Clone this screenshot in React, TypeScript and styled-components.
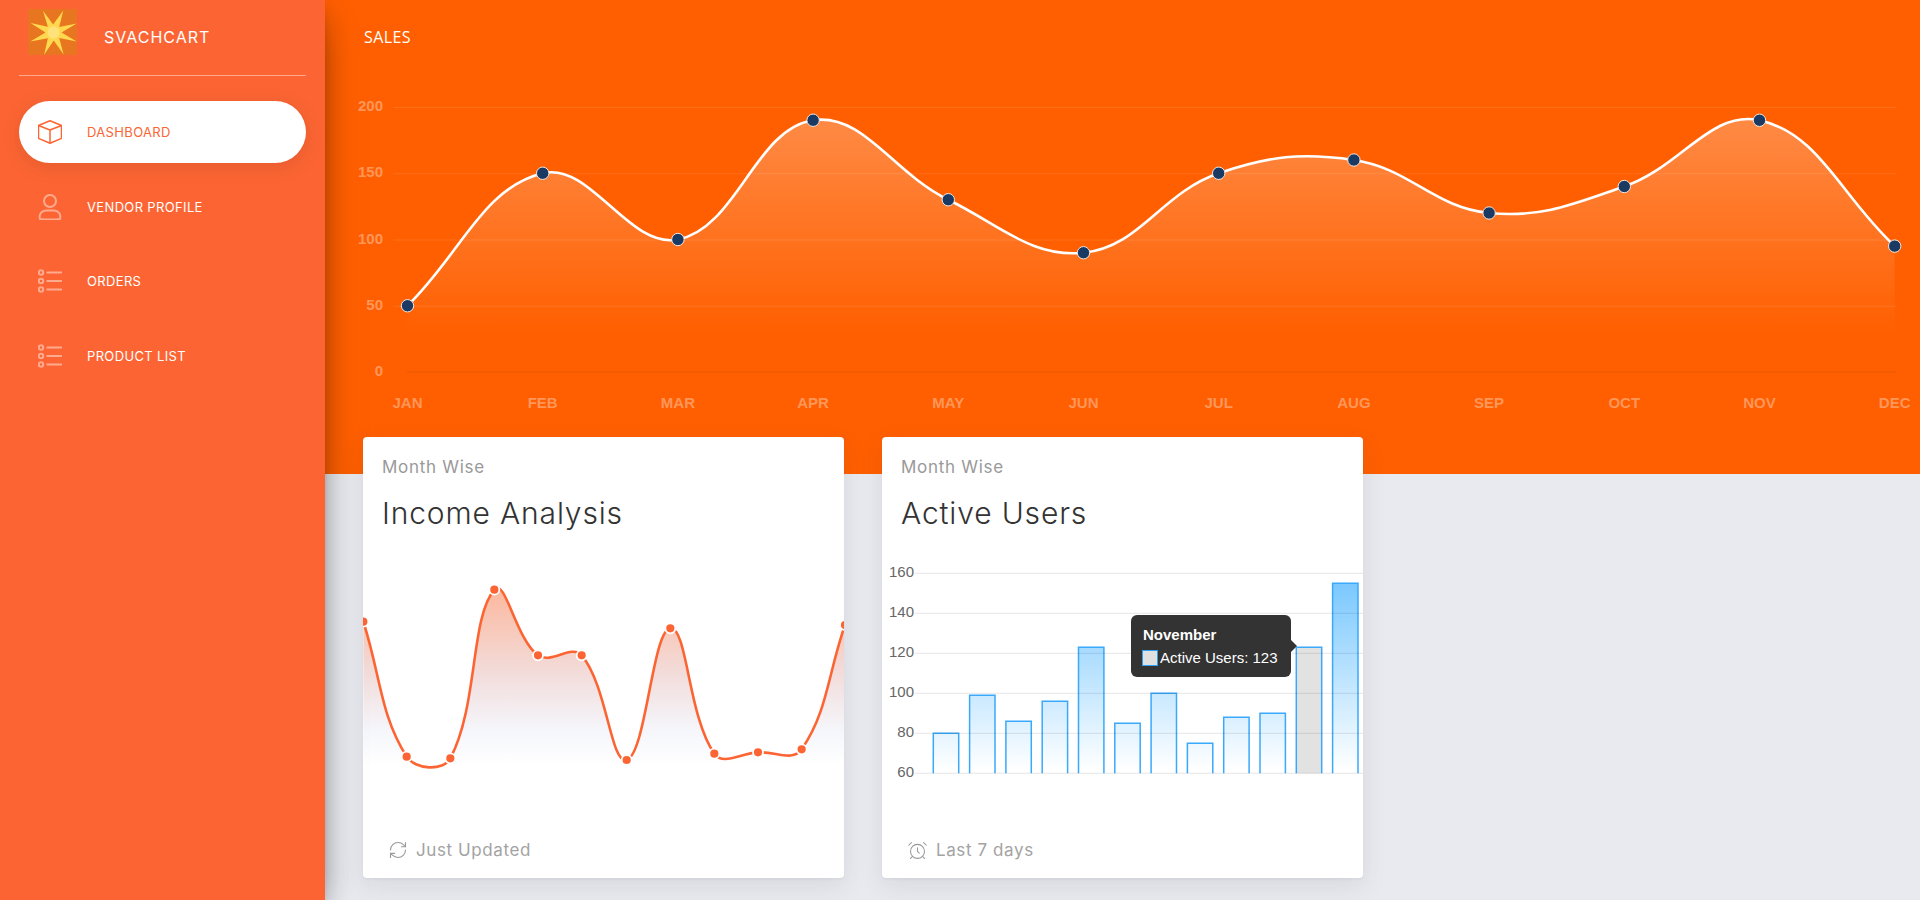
import { ReactNode } from 'react';
import styled, { createGlobalStyle } from 'styled-components';
import { RefreshCw, AlarmClock } from 'lucide-react';

const GlobalStyle = createGlobalStyle`
  html, body {
    margin: 0;
    padding: 0;
    background: #e9eaef;
    font-family: "Inter", "Noto Sans", sans-serif;
  }
  * { box-sizing: border-box; }
`;

const Page = styled.div`
  display: flex;
  width: 100%;
  height: 100vh;
  overflow: hidden;
`;

const Sidebar = styled.aside`
  position: relative;
  z-index: 2;
  flex: 0 0 325px;
  padding: 0 19px;
  background: #fc6533;
  box-shadow: 0 16px 38px -12px rgba(0, 0, 0, 0.56), 0 4px 25px 0 rgba(0, 0, 0, 0.12), 0 8px 10px -5px rgba(0, 0, 0, 0.2);
`;

const Brand = styled.div`
  display: flex;
  align-items: flex-start;
  gap: 27px;
  height: 76px;
  padding: 9px 0 0 9px;
  border-bottom: 1px solid rgba(255, 255, 255, 0.45);
`;

const BrandName = styled.span`
  margin-top: 19px;
  color: #fff;
  font-size: 16px;
  line-height: 18px;
  letter-spacing: 1px;
`;

const Nav = styled.nav`
  display: flex;
  flex-direction: column;
  gap: 12.5px;
  margin-top: 25px;
`;

const NavItem = styled.a<{ $active?: boolean }>`
  display: flex;
  align-items: center;
  gap: 25px;
  height: 62px;
  padding-left: 19px;
  border-radius: 31px;
  background: ${p => (p.$active ? '#fff' : 'transparent')};
  color: ${p => (p.$active ? '#fc6533' : '#fff')};
  font-size: 13px;
  letter-spacing: 0.35px;
  box-shadow: ${p => (p.$active ? '0 4px 20px rgba(0, 0, 0, 0.1)' : 'none')};
  svg {
    flex: 0 0 24px;
    stroke: ${p => (p.$active ? '#fc6533' : 'rgba(255, 255, 255, 0.45)')};
    fill: none;
  }
`;

const Main = styled.main`
  flex: 1;
  min-width: 0;
`;

const SalesPanel = styled.section`
  height: 474px;
  background: #ff5f00;
`;

const SalesTitle = styled.h2`
  margin: 0;
  height: 75px;
  padding: 27px 0 0 39px;
  color: #fff;
  font-family: "Open Sans", sans-serif;
  font-size: 16px;
  font-weight: 400;
  line-height: 20px;
  letter-spacing: 0.4px;
`;

const SalesChart = styled.svg`
  display: block;
  width: 1595px;
  height: 399px;
  overflow: visible;
  text {
    font-family: "Liberation Sans", Arial, sans-serif;
    font-size: 15px;
    font-weight: 700;
    fill: #ff975a;
  }
`;

const CardRow = styled.div`
  display: flex;
  gap: 38px;
  margin-top: -37px;
  padding-left: 38px;
`;

const Card = styled.article`
  display: flex;
  flex-direction: column;
  width: 481px;
  height: 441px;
  padding-top: 20px;
  border-radius: 4px;
  background: #fff;
  box-shadow: 0 2px 2px rgba(0, 0, 0, 0.03), 0 8px 24px rgba(60, 60, 90, 0.1);
`;

const CardKicker = styled.div`
  padding-left: 19px;
  color: #999;
  font-size: 17px;
  line-height: 20px;
  letter-spacing: 0.7px;
`;

const CardTitle = styled.h3`
  margin: 18px 0 0;
  padding-left: 19px;
  color: #333;
  font-size: 30px;
  font-weight: 300;
  line-height: 36px;
  letter-spacing: 0.85px;
`;

const ChartBox = styled.div`
  position: relative;
  height: 280px;
  margin-top: 9px;
  svg { display: block; }
`;

const AxisLabel = styled.text`
  font-family: "Liberation Sans", Arial, sans-serif;
  font-size: 15px;
  fill: #666;
`;

const Tooltip = styled.div`
  position: absolute;
  left: 249px;
  top: 75px;
  width: 160px;
  height: 62px;
  padding: 11px 10px 0 12px;
  border-radius: 6px;
  background: #333;
  color: #fff;
  font-family: "Liberation Sans", Arial, sans-serif;
  font-size: 15px;
  line-height: 17px;
  &::after {
    content: '';
    position: absolute;
    right: -6px;
    top: 25px;
    border-style: solid;
    border-width: 6px 0 6px 6px;
    border-color: transparent transparent transparent #333;
  }
`;

const TooltipTitle = styled.div`
  font-weight: 700;
  margin-bottom: 6px;
`;

const TooltipRow = styled.div`
  display: flex;
  align-items: center;
  gap: 2px;
  margin-left: -1px;
`;

const Swatch = styled.i`
  display: block;
  width: 16px;
  height: 16px;
  border: 1.5px solid #2f9ff0;
  background: #e0e0e0;
`;

const CardFooter = styled.div`
  display: flex;
  align-items: center;
  gap: 8px;
  flex: 1;
  padding: 2px 0 0 25px;
  color: #a3a3a3;
  font-size: 17px;
  letter-spacing: 0.6px;
  svg { color: #999; }
`;

type Pt = { x: number; y: number };

// same curve chart.js draws for tension 0.4
const splinePath = (pts: Pt[], t = 0.4) => {
  const cps = pts.map((cur, i) => {
    const prev = pts[i - 1] || cur;
    const next = pts[i + 1] || cur;
    const d01 = Math.hypot(cur.x - prev.x, cur.y - prev.y);
    const d12 = Math.hypot(next.x - cur.x, next.y - cur.y);
    const fa = (t * d01) / (d01 + d12);
    const fb = (t * d12) / (d01 + d12);
    return {
      inX: cur.x - fa * (next.x - prev.x),
      inY: cur.y - fa * (next.y - prev.y),
      outX: cur.x + fb * (next.x - prev.x),
      outY: cur.y + fb * (next.y - prev.y),
    };
  });
  let d = `M${pts[0].x} ${pts[0].y}`;
  for (let i = 1; i < pts.length; i++) {
    d += ` C${cps[i - 1].outX} ${cps[i - 1].outY} ${cps[i].inX} ${cps[i].inY} ${pts[i].x} ${pts[i].y}`;
  }
  return d;
};

const MONTHS = ['JAN', 'FEB', 'MAR', 'APR', 'MAY', 'JUN', 'JUL', 'AUG', 'SEP', 'OCT', 'NOV', 'DEC'];
const SALES = [50, 150, 100, 190, 130, 90, 150, 160, 120, 140, 190, 95];
const salesY = (v: number) => 372 - v * 1.325;
const salesPts = SALES.map((v, i) => ({ x: 407.5 + i * 135.2, y: salesY(v) }));
const salesLine = splinePath(salesPts);

const SalesGraph = () => (
  <SalesChart viewBox="325 75 1595 399">
    <defs>
      <linearGradient id="salesFill" gradientUnits="userSpaceOnUse" x1="0" y1="118" x2="0" y2="335">
        <stop offset="0" stopColor="#fff" stopOpacity="0.27" />
        <stop offset="1" stopColor="#fff" stopOpacity="0" />
      </linearGradient>
    </defs>
    {[200, 150, 100, 50].map(v => (
      <line key={v} x1="393.5" x2="1896" y1={salesY(v) + 0.5} y2={salesY(v) + 0.5} stroke="rgba(255,255,255,0.1)" />
    ))}
    <line x1="407" x2="1896" y1="372" y2="372" stroke="rgba(0,0,0,0.08)" />
    {[200, 150, 100, 50, 0].map(v => (
      <text key={v} x="383" y={salesY(v) + 4} textAnchor="end">{v}</text>
    ))}
    {MONTHS.map((m, i) => (
      <text key={m} x={salesPts[i].x} y="408" textAnchor="middle">{m}</text>
    ))}
    <path d={`${salesLine} L1894.7 372 L407.5 372 Z`} fill="url(#salesFill)" />
    <path d={salesLine} fill="none" stroke="#fff" strokeWidth="2.6" />
    {salesPts.map(p => (
      <circle key={p.x} cx={p.x} cy={p.y} r="6.2" fill="#1a3a63" stroke="#f3e9e2" strokeWidth="1" />
    ))}
  </SalesChart>
);

// card-local coordinates, the card starts at x 363 and the chart at y 540
const INCOME: Pt[] = [
  [40, 575], [170, 980], [301, 985], [433, 479], [564, 676], [695, 676],
  [830, 990], [961, 595], [1093, 971], [1224, 967], [1355, 958], [1485, 585],
].map(([x, y]) => ({ x: 350 + x / 3 - 363, y: 430 + y / 3 - 540 }));
const incomeLine = splinePath(INCOME);

const IncomeGraph = () => (
  <svg width="481" height="280" viewBox="0 0 481 280">
    <defs>
      <linearGradient id="incomeFill" gradientUnits="userSpaceOnUse" x1="0" y1="50" x2="0" y2="225">
        <stop offset="0" stopColor="#fcb89f" />
        <stop offset="0.5" stopColor="#f2dedd" />
        <stop offset="0.8" stopColor="#f5f6fb" />
        <stop offset="1" stopColor="#fff" />
      </linearGradient>
    </defs>
    <path d={`${incomeLine} L${INCOME[11].x} 280 L${INCOME[0].x} 280 Z`} fill="url(#incomeFill)" />
    <path d={incomeLine} fill="none" stroke="#fc6533" strokeWidth="2.6" />
    {INCOME.map(p => (
      <circle key={p.x} cx={p.x} cy={p.y} r="5" fill="#fc6533" stroke="#fff" strokeWidth="1.8" />
    ))}
  </svg>
);

const USERS = [80, 99, 86, 96, 123, 85, 100, 75, 88, 90, 123, 155];
const barsY = (v: number) => 233.3 - (v - 60) * 2;

const UsersGraph = () => (
  <svg width="481" height="280" viewBox="0 0 481 280">
    <defs>
      <linearGradient id="barFill" gradientUnits="userSpaceOnUse" x1="0" y1="43" x2="0" y2="230">
        <stop offset="0" stopColor="#7ac8ff" />
        <stop offset="1" stopColor="#fff" />
      </linearGradient>
    </defs>
    {USERS.map((v, i) => {
      const x = 51.3 + i * 36.3;
      const y = barsY(v);
      return (
        <g key={i}>
          <rect x={x} y={y} width="25.4" height={233.3 - y} fill={i === 10 ? '#e2e2e2' : 'url(#barFill)'} />
          <path d={`M${x} 233.3 V${y} H${x + 25.4} V233.3`} fill="none" stroke="#3aa9fb" strokeWidth="1.5" />
        </g>
      );
    })}
    {[160, 140, 120, 100, 80, 60].map(v => (
      <g key={v}>
        <line x1="33" x2="481" y1={barsY(v)} y2={barsY(v)} stroke="rgba(0,0,0,0.1)" />
        <AxisLabel x="32" y={barsY(v) + 4} textAnchor="end">{v}</AxisLabel>
      </g>
    ))}
  </svg>
);

const RAYS = [-115, -67, -22, 22, 66, 112, 158, 203];

const Logo = () => (
  <svg width="49" height="46" viewBox="0 0 49 46">
    <rect width="49" height="46" fill="#e8751f" />
    <polygon
      fill="#ffd84f"
      points={RAYS.map(a => {
        const r = (a * Math.PI) / 180;
        const g = r + (22.5 * Math.PI) / 180;
        const cx = 25.5, cy = 23.5;
        return `${cx + Math.cos(r) * 25} ${cy + Math.sin(r) * 24} ${cx + Math.cos(g) * 8} ${cy + Math.sin(g) * 8}`;
      }).join(' ')}
    />
    <circle cx="25.5" cy="23.5" r="6" fill="#ffe27a" />
  </svg>
);

const CubeIcon = () => (
  <svg width="24" height="24" viewBox="0 0 24 24" strokeWidth="1.5" strokeLinejoin="round">
    <path d="M12 .7 23.500 5.500V18.400L12 23.300.5 18.400V5.500Z" />
    <path d="M.5 5.500 12 10 23.500 5.500M12 10V23.300" />
  </svg>
);

const UserIcon = () => (
  <svg width="24" height="26" viewBox="0 0 24 26" strokeWidth="2">
    <circle cx="12" cy="7" r="6" />
    <path d="M2 25C.5 20 4 16.500 8 16.500H16C20 16.500 23.500 20 22 25 18 25.800 6 25.800 2 25Z" />
  </svg>
);

const ListIcon = () => (
  <svg width="24" height="24" viewBox="0 0 24 24" strokeWidth="2">
    <circle cx="3" cy="3.500" r="2.200" />
    <circle cx="3" cy="12" r="2.200" />
    <circle cx="3" cy="20.500" r="2.200" />
    <path d="M8.500 3.500H24M8.500 12H24M8.500 20.500H24" />
  </svg>
);

const NAV: { label: string; icon: ReactNode; active?: boolean }[] = [
  { label: 'DASHBOARD', icon: <CubeIcon />, active: true },
  { label: 'VENDOR PROFILE', icon: <UserIcon /> },
  { label: 'ORDERS', icon: <ListIcon /> },
  { label: 'PRODUCT LIST', icon: <ListIcon /> },
];

function App() {
  return (
    <>
      <GlobalStyle />
      <Page>
        <Sidebar>
          <Brand>
            <Logo />
            <BrandName>SVACHCART</BrandName>
          </Brand>
          <Nav>
            {NAV.map(item => (
              <NavItem key={item.label} $active={item.active}>
                {item.icon}
                <span>{item.label}</span>
              </NavItem>
            ))}
          </Nav>
        </Sidebar>
        <Main>
          <SalesPanel>
            <SalesTitle>SALES</SalesTitle>
            <SalesGraph />
          </SalesPanel>
          <CardRow>
            <Card>
              <CardKicker>Month Wise</CardKicker>
              <CardTitle>Income Analysis</CardTitle>
              <ChartBox>
                <IncomeGraph />
              </ChartBox>
              <CardFooter>
                <RefreshCw size={20} strokeWidth={1.3} />
                Just Updated
              </CardFooter>
            </Card>
            <Card>
              <CardKicker>Month Wise</CardKicker>
              <CardTitle>Active Users</CardTitle>
              <ChartBox>
                <UsersGraph />
                <Tooltip>
                  <TooltipTitle>November</TooltipTitle>
                  <TooltipRow>
                    <Swatch />
                    Active Users: 123
                  </TooltipRow>
                </Tooltip>
              </ChartBox>
              <CardFooter>
                <AlarmClock size={21} strokeWidth={1.2} />
                Last 7 days
              </CardFooter>
            </Card>
          </CardRow>
        </Main>
      </Page>
    </>
  );
}

export default App;
